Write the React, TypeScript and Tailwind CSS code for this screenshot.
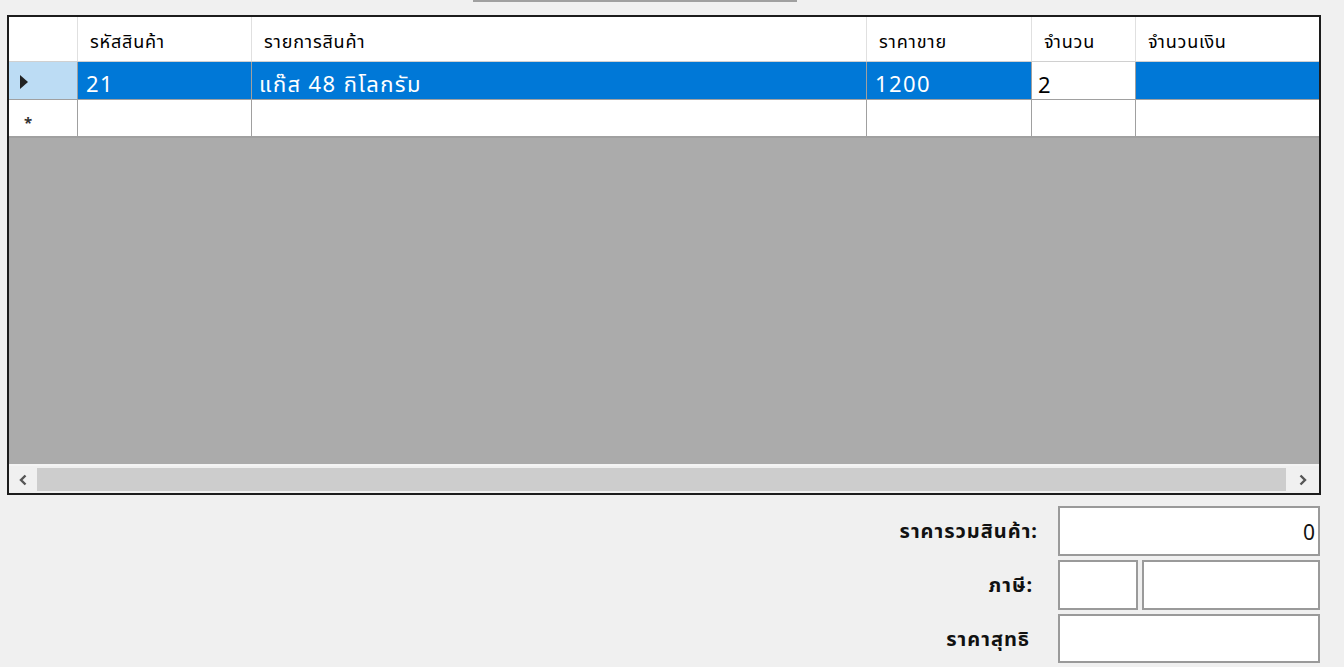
import React from "react";

const font = { fontFamily: 'Tahoma, "Noto Sans", "Noto Sans Thai", "DejaVu Sans", sans-serif' };

export default function App() {
  return (
    <div className="w-[1344px] h-[667px] bg-[#f0f0f0] overflow-hidden relative" style={font}>
      {/* top button edge */}
      <div className="absolute left-[473px] top-[-10px] w-[324px] h-[12px] border-b-2 border-x-2 border-[#a0a0a0] bg-[#e1e1e1]" />
      <div className="pt-[15px] pl-[7px]">
        {/* grid */}
        <div className="w-[1314px] h-[480px] border-2 border-[#1c1c1c] bg-[#ababab] flex flex-col">
          {/* header */}
          <div className="grid grid-cols-[69px_174px_615px_165px_104px_1fr] h-[45px] bg-white border-b border-[#d0d0d0] text-[18px] leading-[26px] tracking-[0.8px] text-black">
            <div className="border-r border-[#e0e0e0]" />
            <div className="border-r border-[#e0e0e0] flex items-center pl-[12px] pt-[3px]">รหัสสินค้า</div>
            <div className="border-r border-[#e0e0e0] flex items-center pl-[12px] pt-[3px]">รายการสินค้า</div>
            <div className="border-r border-[#e0e0e0] flex items-center pl-[12px] pt-[3px]">ราคาขาย</div>
            <div className="border-r border-[#e0e0e0] flex items-center pl-[12px] pt-[3px]">จำนวน</div>
            <div className="flex items-center pl-[12px] pt-[3px]">จำนวนเงิน</div>
          </div>
          {/* row 1 */}
          <div className="grid grid-cols-[69px_174px_615px_165px_104px_1fr] h-[38px] text-[22px] leading-[28px] tracking-[1.4px] border-b border-[#a0a0a0] overflow-hidden">
            <div className="bg-[#bcdcf4] border-r border-[#a0a0a0] flex items-center pl-[10px] pt-[2px]">
              <svg width="10" height="16" viewBox="0 0 10 16"><path d="M1 1 L9 8 L1 15 Z" fill="#222" /></svg>
            </div>
            <div className="bg-[#0078d7] text-white border-r border-[#a0a0a0] flex items-center pl-[8px] pt-[5px]">21</div>
            <div className="bg-[#0078d7] text-white border-r border-[#a0a0a0] flex items-center pl-[7px] pt-[5px]">แก๊ส 48 กิโลกรัม</div>
            <div className="bg-[#0078d7] text-white border-r border-[#a0a0a0] flex items-center pl-[8px] pt-[5px]">1200</div>
            <div className="bg-white text-black border-r border-[#a0a0a0] flex items-center pl-[6px] pt-[7px]">2</div>
            <div className="bg-[#0078d7]" />
          </div>
          {/* row 2 */}
          <div className="grid grid-cols-[69px_174px_615px_165px_104px_1fr] h-[38px] bg-white border-b-2 border-[#a0a0a0] leading-[20px]">
            <div className="border-r border-[#a0a0a0] flex items-center pl-[15px] pt-[8px] text-[15px] font-bold text-[#333]">*</div>
            <div className="border-r border-[#a0a0a0]" />
            <div className="border-r border-[#a0a0a0]" />
            <div className="border-r border-[#a0a0a0]" />
            <div className="border-r border-[#a0a0a0]" />
            <div />
          </div>
          <div className="flex-1" />
          {/* scrollbar */}
          <div className="h-[29px] border-t-2 border-[#f4f4f4] bg-[#f0f0f0] flex">
            <div className="w-[28px] flex items-center justify-center">
              <svg width="10" height="12" viewBox="0 0 10 12"><path d="M7.5 1.5 L3 6 L7.5 10.5" stroke="#555" strokeWidth="2.4" fill="none" /></svg>
            </div>
            <div className="flex-1 bg-[#cdcdcd] my-[2px]" />
            <div className="w-[33px] flex items-center justify-center">
              <svg width="10" height="12" viewBox="0 0 10 12"><path d="M2.5 1.5 L7 6 L2.5 10.5" stroke="#555" strokeWidth="2.4" fill="none" /></svg>
            </div>
          </div>
        </div>
        {/* totals */}
        <div className="flex flex-col items-end w-[1313px] mt-[11px] gap-[4px] text-[20px] tracking-[1px] font-bold text-[#111]">
          <div className="flex items-center gap-[20px]">
            <span>ราคารวมสินค้า:</span>
            <div className="w-[262px] h-[50px] bg-white border-2 border-[#9a9a9a] flex items-center justify-end pr-[2px] pt-[3px] font-normal text-[21px]">0</div>
          </div>
          <div className="flex items-center">
            <span className="mr-[25px]">ภาษี:</span>
            <div className="w-[80px] h-[50px] bg-white border-2 border-[#9a9a9a]" />
            <div className="w-[178px] h-[50px] ml-[4px] bg-white border-2 border-[#9a9a9a]" />
          </div>
          <div className="flex items-center">
            <span className="mr-[28px]">ราคาสุทธิ</span>
            <div className="w-[262px] h-[49px] bg-white border-2 border-[#9a9a9a]" />
          </div>
        </div>
      </div>
    </div>
  );
}
